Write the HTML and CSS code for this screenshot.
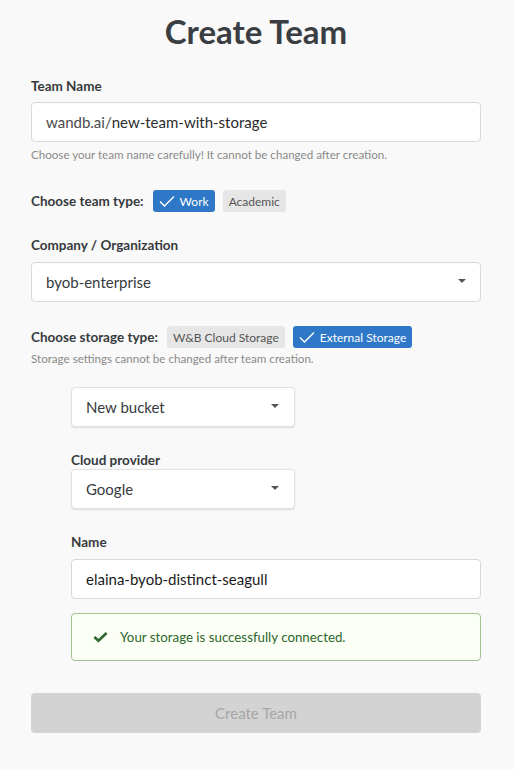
FILE: index.html
```html
<!DOCTYPE html>
<html>
<head>
<meta charset="utf-8">
<link rel="stylesheet" href="styles.css">
</head>
<body>
<div class="page">
  <h1 class="title">Create Team</h1>

  <div class="label label-first">Team Name</div>
  <div class="input"><span class="prefix">wandb.ai/</span><span class="value">new-team-with-storage</span></div>
  <div class="help">Choose your team name carefully! It cannot be changed after creation.</div>

  <div class="choice-row row-team">
    <span class="choice-label">Choose team type:</span>
    <span class="tag tag-on"><svg class="tick" viewBox="0 0 16 12" width="16" height="12"><path d="M1 6.5 L5.5 11 L15 1.5" fill="none" stroke="#fff" stroke-width="1.4"/></svg>Work</span>
    <span class="tag">Academic</span>
  </div>

  <div class="label label-gap">Company / Organization</div>
  <div class="input select"><span class="value">byob-enterprise</span><span class="caret"></span></div>

  <div class="choice-row row-storage">
    <span class="choice-label">Choose storage type:</span>
    <span class="tag">W&amp;B Cloud Storage</span>
    <span class="tag tag-on"><svg class="tick" viewBox="0 0 16 12" width="16" height="12"><path d="M1 6.5 L5.5 11 L15 1.5" fill="none" stroke="#fff" stroke-width="1.4"/></svg>External Storage</span>
  </div>
  <div class="help help-tight">Storage settings cannot be changed after team creation.</div>

  <div class="nested">
    <div class="input select small shadow"><span class="value">New bucket</span><span class="caret"></span></div>

    <div class="label label-gap label-tight">Cloud provider</div>
    <div class="input select small shadow"><span class="value">Google</span><span class="caret"></span></div>

    <div class="label label-gap">Name</div>
    <div class="input"><span class="value dark">elaina-byob-distinct-seagull</span></div>

    <div class="success">
      <svg class="ok" viewBox="0 0 16 12" width="15" height="12"><path d="M1.5 6 L5.8 10 L14.5 1.8" fill="none" stroke="#2c662d" stroke-width="2.8" stroke-linejoin="miter"/></svg>
      <span>Your storage is successfully connected.</span>
    </div>
  </div>

  <div class="button">Create Team</div>
  <div class="footnote">By creating a team you acknowledge that the storage bucket will be linked</div>
</div>
</body>
</html>
```

FILE: styles.css
```css
html, body {
  margin: 0;
  padding: 0;
  background: #f9f9f9;
  height: 770px;
  overflow: hidden;
}
body {
  font-family: "Lato", "Liberation Sans", sans-serif;
  color: #363a3d;
}
.page {
  width: 450px;
  margin-left: 31px;
}
.title {
  margin: 11px 0 0 0;
  height: 40px;
  line-height: 40px;
  font-size: 33px;
  font-weight: 700;
  text-align: center;
  color: #3a3e42;
}
.label {
  font-size: 13.5px;
  font-weight: 700;
  line-height: 18px;
  height: 18px;
  color: #363a3d;
}
.label-first { margin-top: 26px; margin-bottom: 7px; }
.label-gap { margin-top: 24px; margin-bottom: 8px; }
.label-tight { margin-bottom: 0; }
.input {
  box-sizing: border-box;
  height: 40px;
  background: #fff;
  border: 1px solid #d9d9d9;
  border-radius: 4px;
  display: flex;
  align-items: center;
  padding: 0 14px;
  font-size: 15px;
  color: #1f1f1f;
}
.prefix { color: #4a4a4a; }
.value { color: #2b2b2b; }
.value.dark { color: #1a1a1a; }
.select { justify-content: space-between; }
.select .value { color: #363a3d; }
.small { width: 224px; padding-left: 14px; padding-right: 15px; }
.shadow { border-color: #e2e2e2; box-shadow: 0 1px 2px rgba(0,0,0,0.12); }
.caret {
  width: 0;
  height: 0;
  border-left: 4px solid transparent;
  border-right: 4px solid transparent;
  border-top: 4px solid #555;
  margin-top: -2px;
}
.help {
  margin-top: 6px;
  font-size: 11.6px;
  line-height: 14px;
  height: 14px;
  color: #8a8a8a;
}
.help-tight { margin-top: 4px; }
.choice-row {
  display: flex;
  align-items: center;
  height: 22px;
}
.row-team { margin-top: 28px; }
.row-storage { margin-top: 24px; }
.choice-label {
  font-size: 13.5px;
  font-weight: 700;
  margin-right: 9px;
  color: #363a3d;
}
.tag {
  box-sizing: border-box;
  height: 22px;
  display: inline-flex;
  align-items: center;
  padding: 0 6px;
  margin-right: 8px;
  border-radius: 3px;
  background: #e6e6e6;
  color: #555;
  font-size: 12px;
}
.tag-on {
  background: #2e78c7;
  color: #fff;
}
.tick { margin-right: 5px; }
.nested {
  margin-top: 21px;
  margin-left: 40px;
}
.success {
  box-sizing: border-box;
  margin-top: 14px;
  height: 48px;
  background: #fcfff5;
  border: 1px solid #a3c293;
  border-radius: 4px;
  display: flex;
  align-items: center;
  padding-left: 21px;
  font-size: 13.3px;
  color: #2c662d;
}
.ok { margin-right: 12px; }
.button {
  margin-top: 32px;
  height: 40px;
  background: #d3d3d3;
  border-radius: 4px;
  display: flex;
  align-items: center;
  justify-content: center;
  font-size: 15px;
  color: #a6a6a6;
}
.footnote {
  margin-top: 33px;
  text-align: center;
  font-size: 13px;
  line-height: 18px;
  color: #9a9a9a;
}
```
